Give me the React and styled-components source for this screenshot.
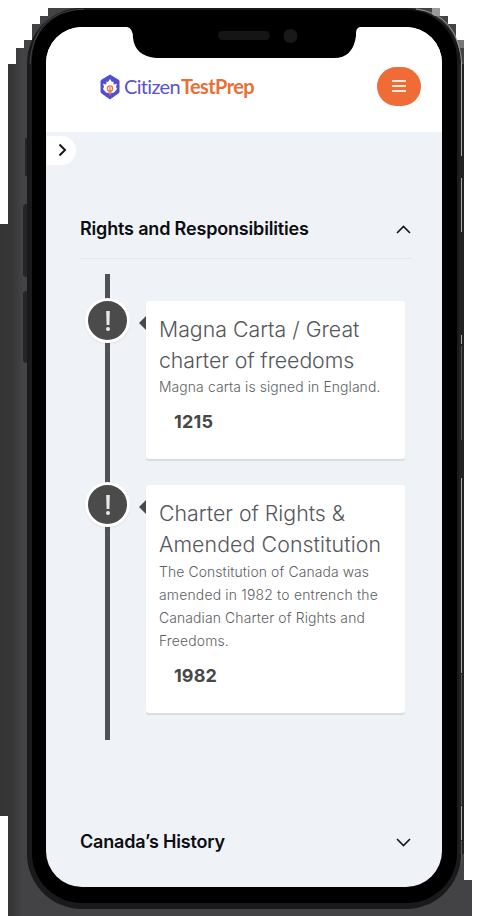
import React from "react";
import styled, { createGlobalStyle } from "styled-components";

const GlobalStyle = createGlobalStyle`
  * { box-sizing: border-box; }
  body { margin: 0; background: #fff; font-family: Inter, "Liberation Sans", sans-serif; }
`;

const Stage = styled.div`
  position: relative;
  width: 480px;
  height: 916px;
  overflow: hidden;
  background: #fff;
`;

const DeviceArt = styled.svg`
  position: absolute;
  inset: 0;
  display: block;
`;

const Screen = styled.main`
  position: relative;
  width: 396px;
  height: 860px;
  margin: 27px 0 0 46px;
  border-radius: 36px;
  overflow: hidden;
  background: #eff3f8;
  display: flex;
  flex-direction: column;
`;

const Header = styled.header`
  flex: none;
  height: 105px;
  padding: 14px 21px 0 54px;
  background: #fff;
  display: flex;
  align-items: center;
  justify-content: space-between;
`;

const Brand = styled.div`
  display: flex;
  align-items: center;
  gap: 4px;
  font: 400 20px/24px Lato, "Liberation Sans", sans-serif;
`;

const BrandIcon = styled.svg`
  flex: none;
  display: block;
`;

const BrandName = styled.span`
  color: #5a52cf;
  letter-spacing: -0.68px;
  white-space: nowrap;
  padding-bottom: 2px;

  b {
    color: #e96f37;
    letter-spacing: -0.6px;
    margin-left: 1px;
  }
`;

const MenuButton = styled.button`
  width: 44px;
  height: 39px;
  padding: 0 0 1px;
  border: 0;
  border-radius: 20px;
  background: #f06c36;
  display: flex;
  flex-direction: column;
  align-items: center;
  justify-content: center;
  gap: 3px;
`;

const MenuBar = styled.span`
  width: 14px;
  height: 2px;
  background: #ffe9dc;
`;

const DrawerTab = styled.button`
  flex: none;
  width: 29px;
  height: 29px;
  margin: 4px 0 0 1px;
  padding: 0 0 1px 1px;
  border: 0;
  border-radius: 0 15px 15px 0;
  background: #fff;
  display: flex;
  align-items: center;
  justify-content: center;
`;

const Sections = styled.div`
  padding: 40px 30px 0 34px;
`;

const SectionHeader = styled.div`
  height: 54px;
  border-bottom: ${(p) => (p.$open ? "1px solid #e4e8ec" : "0")};
  margin-top: ${(p) => p.$gap || 0}px;
  display: flex;
  align-items: center;
  justify-content: space-between;
  padding-bottom: 6px;
`;

const SectionTitle = styled.h2`
  margin: 0;
  font-size: 18px;
  line-height: 24px;
  font-weight: 600;
  letter-spacing: ${(p) => p.$track}px;
  color: #0b0d10;
`;

const Timeline = styled.div`
  height: 466px;
  margin-top: 15px;
  padding: 27px 8px 0 7px;
  background: linear-gradient(#505154, #505154) 25px 0 / 5px 466px no-repeat;
  display: flex;
  flex-direction: column;
  gap: 26px;
`;

const Event = styled.article`
  display: grid;
  grid-template-columns: 41px 259px;
  column-gap: 18px;
  align-items: start;
`;

const Marker = styled.div`
  width: 45px;
  height: 45px;
  margin: -3px 0 0 -2px;
  border: 3px solid #fff;
  border-radius: 50%;
  background: #4b4b4b;
  box-shadow: 0 1px 2px rgba(90, 80, 70, 0.12);
  display: flex;
  align-items: center;
  justify-content: center;
`;

const Card = styled.div`
  position: relative;
  height: ${(p) => p.$height}px;
  padding: 13px;
  border-radius: 3px;
  background: #fff;
  box-shadow: 0 2px 1px #d9dbdd;

  &::before {
    content: "";
    position: absolute;
    left: -7px;
    top: 15px;
    border: solid transparent;
    border-width: 7px 7px 7px 0;
    border-right-color: #494a4c;
  }
`;

const CardTitle = styled.h3`
  margin: 0;
  font-size: 21.3px;
  line-height: 31px;
  font-weight: 300;
  color: #54575b;
`;

const CardText = styled.p`
  margin: ${(p) => p.$gap}px 0 0;
  font-size: 13.9px;
  line-height: 23px;
  font-weight: 300;
  color: #5c5f63;
`;

const Line = styled.span`
  display: block;
  white-space: nowrap;
  letter-spacing: ${(p) => p.$track}px;
`;

const Year = styled.div`
  margin: 11px 0 0 15px;
  font-size: 18px;
  line-height: 24px;
  font-weight: 700;
  letter-spacing: ${(p) => p.$track}px;
  color: #484848;
`;

const Chevron = ({ d, w, h, stroke = 1.6 }) => (
  <svg width={w} height={h} viewBox={`0 0 ${w} ${h}`} fill="none" stroke="#14171a" strokeWidth={stroke}>
    <path d={d} />
  </svg>
);

const events = [
  {
    year: "1215",
    yearTrack: 0.25,
    height: 158,
    textGap: 0,
    title: [["Magna Carta / Great", 0], ["charter of freedoms", -0.08]],
    text: [["Magna carta is signed in England.", 0.11]],
  },
  {
    year: "1982",
    yearTrack: 0.1,
    height: 228,
    textGap: 1,
    title: [["Charter of Rights &", 0], ["Amended Constitution", 0.1]],
    text: [
      ["The Constitution of Canada was", 0.12],
      ["amended in 1982 to entrench the", 0.21],
      ["Canadian Charter of Rights and", 0.14],
      ["Freedoms.", 0.17],
    ],
  },
];

const Lines = ({ rows }) => rows.map(([t, track]) => <Line key={t} $track={track}>{t}</Line>);

const Phone = () => (
  <DeviceArt width="480" height="916" viewBox="0 0 480 916">
    <defs>
      <linearGradient id="side" x1="0" x2="28" y1="0" y2="0" gradientUnits="userSpaceOnUse">
        <stop offset="0" stopColor="#353535" />
        <stop offset=".45" stopColor="#373737" />
        <stop offset=".8" stopColor="#434345" />
        <stop offset="1" stopColor="#434345" />
      </linearGradient>
    </defs>
    <path
      shapeRendering="crispEdges"
      fill="url(#side)"
      d="M48 8H440V16H448V24H456V40H464V880H472V916H8V816H0V224H8V64H16V48H24V40H32V24H40V16H48Z"
    />
    <path shapeRendering="crispEdges" fill="#9a9a9a" d="M432 8h8v8h-8z" />
    <path shapeRendering="crispEdges" fill="#777" d="M456 40h8v8h-8z" />
    <path fill="#252527" d="M25 138h4v38h-4zM23 207q0-3 4-3v73q-4 0-4-3zM23 294q0-3 4-3v72q-4 0-4-3z" />
    <rect x="27" y="8" width="434" height="901" rx="55" fill="#1a1a1c" />
    <path d="M30 64Q33 11 84 9" fill="none" stroke="#444" strokeWidth="1" />
    <path d="M416 9Q459 14 462 66" fill="none" stroke="#999" strokeWidth="1" />
    <path d="M459 64h5v790h-5z" fill="#222224" />
    <path d="M461.5 62V156M461.5 178V232M461.5 335V344M461.5 478V673M461.5 806V840" fill="none" stroke="#aaa" />
    <path d="M461.5 346V440M461.5 674V805M461.5 841V864" fill="none" stroke="#555" />
    <rect x="32" y="10" width="425" height="893" rx="50" fill="#000" />
  </DeviceArt>
);

const Notch = () => (
  <DeviceArt width="480" height="100" viewBox="0 0 480 100">
    <path d="M125 26H363V27H360Q356 28 356 33V36Q353 58 334 58H156Q135 56 133 38Q133 28 127 27Z" />
    <rect x="218" y="31" width="52" height="9" rx="4.5" fill="#151515" />
    <circle cx="290.5" cy="36" r="7" fill="#191919" />
  </DeviceArt>
);

export default function App() {
  return (
    <Stage>
      <GlobalStyle />
      <Phone />
      <Screen>
        <Header>
          <Brand>
            <BrandIcon width="20" height="26" viewBox="0 0 20 26">
              <path d="M10 1l9 5.500v12L10 25l-9-6.500v-12z" fill="#514fd0" stroke="#514fd0" strokeLinejoin="round" />
              <path d="M10 5l2 3 1.500-.6.200 3 3.300-.7-1 3 1 2.300-3 3.500-4 1-4-1-3-3.500 1-2.300-1-3 3.300.7.200-3L8 8z" fill="#fff" />
              <circle cx="10" cy="14.500" r="2.600" fill="none" stroke="#e5754a" strokeWidth="1.300" />
              <path d="M10 13v8.500M8 18h4" fill="none" stroke="#e5754a" strokeWidth="1.200" />
            </BrandIcon>
            <BrandName>Citizen<b>TestPrep</b></BrandName>
          </Brand>
          <MenuButton aria-label="Menu"><MenuBar /><MenuBar /><MenuBar /></MenuButton>
        </Header>
        <DrawerTab aria-label="Open drawer">
          <Chevron w={9} h={14} stroke={2} d="M1.500 1.500L7 7l-5.500 5.500" />
        </DrawerTab>
        <Sections>
          <SectionHeader $open>
            <SectionTitle $track={-0.17}>Rights and Responsibilities</SectionTitle>
            <Chevron w={16} h={10} d="M1 9L7.500 2.500 14 9" />
          </SectionHeader>
          <Timeline>
            {events.map((e) => (
              <Event key={e.year}>
                <Marker>
                  <svg width="8" height="24" viewBox="0 0 8 24" fill="#e9e9e7">
                    <path d="M2.200 2h3.600l-.4 14h-2.800z" />
                    <circle cx="4" cy="20" r="2" />
                  </svg>
                </Marker>
                <Card $height={e.height}>
                  <CardTitle><Lines rows={e.title} /></CardTitle>
                  <CardText $gap={e.textGap}><Lines rows={e.text} /></CardText>
                  <Year $track={e.yearTrack}>{e.year}</Year>
                </Card>
              </Event>
            ))}
          </Timeline>
          <SectionHeader $gap={78}>
            <SectionTitle $track={-0.17}>Canada’s History</SectionTitle>
            <Chevron w={16} h={10} d="M1 2l6.500 6.500L14 2" />
          </SectionHeader>
        </Sections>
      </Screen>
      <Notch />
    </Stage>
  );
}
